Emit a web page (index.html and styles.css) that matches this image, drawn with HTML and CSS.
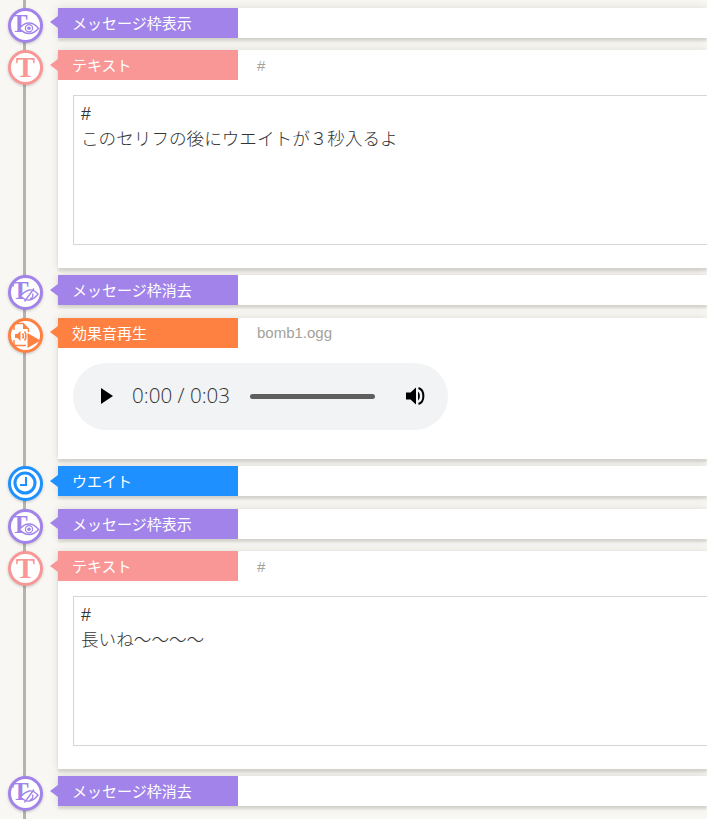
FILE: index.html
```html
<!DOCTYPE html>
<html lang="en">
<head>
  <meta charset="UTF-8">
  <title>Timeline</title>
  <link rel="stylesheet" href="styles.css">
</head>
<body>
  <div class="timeline">
    <div class="row purple">
      <div class="icon"><svg viewBox="0 0 35 35"><text x="3" y="24" class="t-small">T</text><path class="eye" d="M11.500 20.500c3-4 6.500-5.500 9.500-5.500s6.500 1.500 9.500 5.500c-3 3.500-6.500 5-9.500 5s-6.500-1.500-9.500-5z"/><circle class="iris" cx="21" cy="20.300" r="3.600"/><circle class="eye-dot" cx="21" cy="20.300" r="1.800"/></svg></div>
      <div class="card"><div class="head"><div class="label">メッセージ枠表示</div></div></div>
    </div>
    <div class="row pink has-body">
      <div class="icon"><svg viewBox="0 0 35 35"><text x="17.500" y="27" class="t-big">T</text></svg></div>
      <div class="card">
        <div class="head"><div class="label">テキスト</div><div class="value">#</div></div>
        <div class="body"><div class="text-box">#<br>このセリフの後にウエイトが３秒入るよ</div></div>
      </div>
    </div>
    <div class="row purple">
      <div class="icon"><svg viewBox="0 0 35 35"><text x="4" y="24" class="t-small">T</text><path class="eye" d="M12.500 21c3-3.500 6-5.500 9-6s5.500 1 8.500 4c-2.500 3.500-5.500 5.500-8.500 6s-6-1-9-4z"/><path class="eye" d="M16.500 26.500l9.500-13"/><path class="eye" d="M24.500 18.500c1 2.500 0 4.500-2.500 5.500"/></svg></div>
      <div class="card"><div class="head"><div class="label">メッセージ枠消去</div></div></div>
    </div>
    <div class="row orange has-body">
      <div class="icon"><svg viewBox="0 0 35 35"><path class="file" d="M6 12V5.500h9l5.500 5.500v3M6 22v5.500h12"/><path class="fold" d="M15 5.500v5.500h5.500z"/><path class="fill" d="M7 16h2.500l3-3v10l-3-3H7zM19.500 15l13 7.500-13 7.500z"/><path class="file" d="M14.500 15.500c1.200 1.500 1.200 3.500 0 5M16.500 13.500c2 2.500 2 6.500 0 9"/></svg></div>
      <div class="card">
        <div class="head"><div class="label">効果音再生</div><div class="value">bomb1.ogg</div></div>
        <div class="body">
          <div class="player">
            <svg class="play" viewBox="0 0 12 16"><path d="M0 0l12 8-12 8z"/></svg>
            <span class="time">0:00 / 0:03</span>
            <div class="track"></div>
            <svg class="volume" viewBox="0 0 20 20"><path d="M0 6.500h4.500L10 1.500v17l-5.500-5H0z"/><path d="M12 5.500c2.500 2.500 2.500 6.500 0 9z"/><path class="wave" d="M12.500 2c6.500 2 6.500 14 0 16"/></svg>
          </div>
        </div>
      </div>
    </div>
    <div class="row blue">
      <div class="icon"><svg viewBox="0 0 35 35"><circle class="ring" cx="17" cy="17" r="10"/><path class="hands" d="M18 11v8h-6"/></svg></div>
      <div class="card"><div class="head"><div class="label">ウエイト</div></div></div>
    </div>
    <div class="row purple">
      <div class="icon"><svg viewBox="0 0 35 35"><text x="3" y="24" class="t-small">T</text><path class="eye" d="M11.500 20.500c3-4 6.500-5.500 9.500-5.500s6.500 1.500 9.500 5.500c-3 3.500-6.500 5-9.500 5s-6.500-1.500-9.500-5z"/><circle class="iris" cx="21" cy="20.300" r="3.600"/><circle class="eye-dot" cx="21" cy="20.300" r="1.800"/></svg></div>
      <div class="card"><div class="head"><div class="label">メッセージ枠表示</div></div></div>
    </div>
    <div class="row pink has-body">
      <div class="icon"><svg viewBox="0 0 35 35"><text x="17.500" y="27" class="t-big">T</text></svg></div>
      <div class="card">
        <div class="head"><div class="label">テキスト</div><div class="value">#</div></div>
        <div class="body"><div class="text-box">#<br>長いね～～～～</div></div>
      </div>
    </div>
    <div class="row purple">
      <div class="icon"><svg viewBox="0 0 35 35"><text x="4" y="24" class="t-small">T</text><path class="eye" d="M12.500 21c3-3.500 6-5.500 9-6s5.500 1 8.500 4c-2.500 3.500-5.500 5.500-8.500 6s-6-1-9-4z"/><path class="eye" d="M16.500 26.500l9.500-13"/><path class="eye" d="M24.500 18.500c1 2.500 0 4.500-2.500 5.500"/></svg></div>
      <div class="card"><div class="head"><div class="label">メッセージ枠消去</div></div></div>
    </div>
  </div>
</body>
</html>
```

FILE: styles.css
```css
html, body {
  margin: 0;
  padding: 0;
  height: 100%;
  overflow: hidden;
}

body {
  background-color: #f8f7f3;
  font-family: "Liberation Sans", "Noto Sans CJK JP", sans-serif;
}

.timeline {
  position: relative;
  padding-top: 7.5px;
  height: 100%;
  box-sizing: border-box;
}

/* vertical line behind the icons */
.timeline::before {
  content: "";
  position: absolute;
  top: 0;
  bottom: 0;
  left: 23px;
  width: 3px;
  background-color: #b5b3ac;
}

.row {
  position: relative;
  display: flex;
  align-items: flex-start;
  margin-bottom: 12.5px;
}

.row.has-body {
  margin-bottom: 7px;
}

.purple { --color: #a183ea; }
.pink { --color: #f99797; }
.orange { --color: #ff8142; }
.blue { --color: #1e90ff; }

.icon {
  position: relative;
  flex: none;
  width: 35px;
  height: 35px;
  margin-left: 8px;
  margin-right: 15px;
  margin-bottom: -5px;
  box-sizing: border-box;
  border-radius: 50%;
  background-color: #fff;
  box-shadow: 0 1px 3px rgba(0, 0, 0, 0.2);
  border: 3px solid var(--color);
}

.icon svg {
  position: absolute;
  top: -3px;
  left: -3px;
  width: 35px;
  height: 35px;
}

.t-small {
  font-family: "Liberation Serif", serif;
  font-weight: bold;
  font-size: 25px;
  fill: var(--color);
}

.t-big {
  font-family: "Liberation Serif", serif;
  font-weight: bold;
  font-size: 29px;
  text-anchor: middle;
  fill: var(--color);
}

.eye {
  fill: #fff;
  stroke: var(--color);
  stroke-width: 1.3;
}

.iris {
  fill: #fff;
  stroke: var(--color);
  stroke-width: 1.2;
}

.eye-dot {
  fill: var(--color);
}

.file {
  fill: none;
  stroke: var(--color);
  stroke-width: 1.5;
}

.fold {
  fill: var(--color);
}

.fill {
  fill: var(--color);
}

.ring {
  fill: none;
  stroke: var(--color);
  stroke-width: 3;
}

.hands {
  fill: none;
  stroke: var(--color);
  stroke-width: 2;
}

.card {
  flex: 1;
  min-width: 0;
  background-color: #fff;
  box-shadow: 0 0 8px rgba(100, 95, 80, 0.18), 0 3px 2px rgba(100, 95, 80, 0.16);
}

.head {
  display: flex;
  align-items: center;
  height: 30px;
}

.label {
  position: relative;
  flex: none;
  width: 180px;
  height: 30px;
  line-height: 31px;
  box-sizing: border-box;
  padding-left: 14px;
  color: #fff;
  font-size: 15px;
  background-color: var(--color);
}

/* little arrow pointing at the icon */
.label::before {
  content: "";
  position: absolute;
  top: 8.500px;
  left: -8px;
  border-style: solid;
  border-width: 6.500px 8px 6.500px 0;
  border-color: transparent var(--color) transparent transparent;
}

.value {
  margin-left: 19px;
  color: #a3a29b;
  font-size: 15px;
}

.body {
  padding: 15px 0 23px 15px;
  overflow: hidden;
}

.text-box {
  width: 800px;
  height: 150px;
  box-sizing: border-box;
  padding: 6px 7px;
  border: 1px solid #d6d6d6;
  color: #333;
  font-size: 17.6px;
  font-weight: 300;
  line-height: 25px;
}

.orange .body {
  padding-bottom: 29px;
}

.player {
  display: flex;
  align-items: center;
  width: 375px;
  height: 67.500px;
  box-sizing: border-box;
  padding-left: 28px;
  border-radius: 34px;
  background-color: #f1f3f4;
  color: #333;
}

.play {
  width: 12px;
  height: 16px;
  flex: none;
}

.time {
  margin-left: 19px;
  width: 118px;
  flex: none;
  font-family: "Open Sans", "Noto Sans", sans-serif;
  font-size: 20.600px;
  font-weight: 300;
  position: relative;
  top: -1px;
}

.track {
  width: 125px;
  height: 5px;
  flex: none;
  border-radius: 3px;
  background-color: #5e5e5e;
}

.volume {
  width: 20px;
  height: 20px;
  flex: none;
  margin-left: 31px;
}

.volume .wave {
  fill: none;
  stroke: #000;
  stroke-width: 2;
}
```
